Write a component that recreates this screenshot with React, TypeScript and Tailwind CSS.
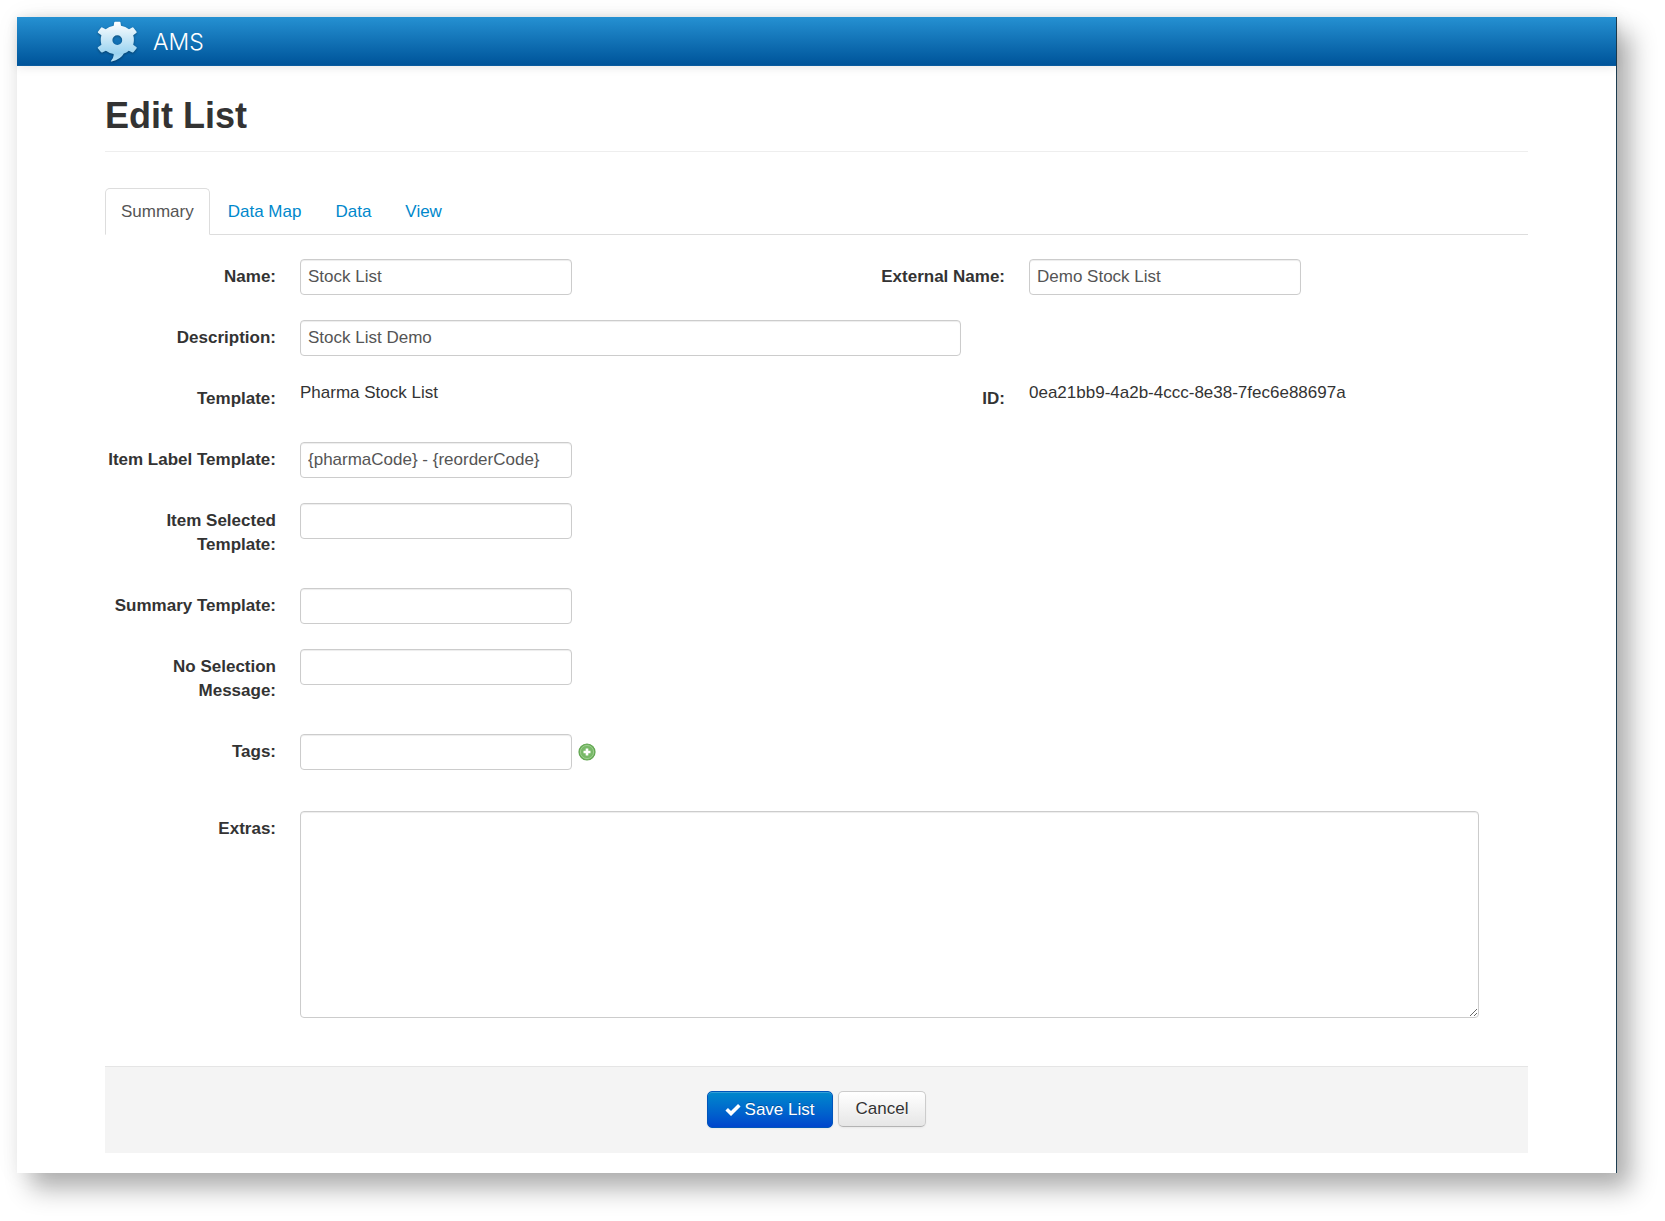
import { useState } from 'react';
import type { ReactNode } from 'react';
import clsx from 'clsx';

const TABS = ['Summary', 'Data Map', 'Data', 'View'];

const inputClass =
  'h-9 rounded border border-[#ccc] bg-white px-[7px] text-[#555] shadow-[inset_0_1px_1px_rgba(0,0,0,0.075)] focus:border-[#52a8ec] focus:outline-none';

interface FieldProps {
  id: string;
  label: string;
  children: ReactNode;
}

function Field({ id, label, children }: FieldProps) {
  return (
    <div className="flex items-start gap-6">
      <label htmlFor={id} className="w-[171px] shrink-0 py-1.5 text-right font-bold">
        {label}
      </label>
      <div className="flex min-w-0 flex-1 items-center gap-1.5">{children}</div>
    </div>
  );
}

interface TextFieldProps {
  id: string;
  label: string;
  initial?: string;
  wide?: boolean;
  children?: ReactNode;
}

function TextField({ id, label, initial = '', wide = false, children }: TextFieldProps) {
  const [value, setValue] = useState(initial);

  return (
    <Field id={id} label={label}>
      <input
        id={id}
        type="text"
        value={value}
        onChange={(e) => setValue(e.target.value)}
        className={clsx(inputClass, 'max-w-full', wide ? 'w-[661px]' : 'w-[272px]')}
      />
      {children}
    </Field>
  );
}

// Gear with a speech-bubble tail
function Logo() {
  return (
    <svg width="42" height="42" viewBox="0 0 42 42" aria-hidden="true" className="drop-shadow-[0_1px_1px_rgba(0,0,0,0.35)]">
      <defs>
        <linearGradient id="logo-fill" x1="0" y1="0" x2="0" y2="1">
          <stop offset="0" stopColor="#ffffff" />
          <stop offset="0.8" stopColor="#9ad3f0" />
          <stop offset="1" stopColor="#b5e0f5" />
        </linearGradient>
      </defs>
      <path
        fill="url(#logo-fill)"
        fillRule="evenodd"
        d="M18.2 1.6Q18.200.7 19.100.7H23.600Q24.500.7 24.500 1.600L25 4.700Q29.600 5.300 33 8.300L36.200 6.400Q37 6 37.500 6.700L40.400 10.600Q41 11.500 40.200 12L37.200 14.200Q38.600 18.800 37.200 23.700L40.300 26Q41.100 26.600 40.500 27.400L37.700 31.100Q37.100 31.900 36.300 31.400L32.800 29.700Q30.500 31.600 27.800 32.600Q24.800 38.600 15.600 40.400Q14.400 40.600 15.100 39.700Q18.200 36 17.600 33Q13.300 32.300 9.900 29.700L6.300 31.400Q5.500 31.900 4.900 31.100L2 27.400Q1.400 26.600 2.200 26L5.400 23.700Q4.100 18.800 5.400 14.200L2.300 12Q1.500 11.500 2.100 10.600L5 6.700Q5.500 6 6.300 6.400L9.700 8.300Q13.100 5.300 17.700 4.700ZM21.300 14.200a4.900 4.900 0 1 0 0 9.800a4.900 4.900 0 1 0 0-9.800z"
      />
    </svg>
  );
}

function AddIcon() {
  return (
    <svg width="18" height="18" viewBox="0 0 18 18" aria-hidden="true">
      <circle cx="9" cy="9" r="8" fill="#78b968" stroke="#61a650" strokeWidth="1.2" />
      <circle cx="9" cy="9" r="6.6" fill="none" stroke="#9ccd8e" strokeWidth="1" />
      <path d="M9 5.500v7M5.500 9h7" stroke="#fff" strokeWidth="2.600" />
    </svg>
  );
}

function CheckIcon() {
  return (
    <svg width="16" height="13" viewBox="0 0 16 13" aria-hidden="true">
      <path d="M1.700 6.200l4.300 4.300L14.300 2.200" fill="none" stroke="#fff" strokeWidth="3.600" />
    </svg>
  );
}

export default function App() {
  const [activeTab, setActiveTab] = useState('Summary');
  const [extras, setExtras] = useState('');

  return (
    <div className="bg-white pt-[17px] pr-12 pb-12 pl-[17px] font-['Liberation_Sans',Arial,sans-serif] text-[17px] leading-6 text-[#333]">
      <div className="border-r border-[#1c3c50] bg-white shadow-[14px_16px_24px_rgba(0,0,0,0.3),0_0_24px_rgba(0,0,0,0.06)]">
        <header className="flex h-[49px] items-center gap-[15px] border-b border-[#0a5c9f] bg-linear-to-b from-[#2591d2] to-[#00549a] pt-0.5 pl-[79px] shadow-[0_1px_10px_rgba(0,0,0,0.1)]">
          <Logo />
          <span className="font-['Inter','Liberation_Sans',sans-serif] text-[23px] font-light text-white">AMS</span>
        </header>

        <main className="pt-7 pr-[88px] pb-5 pl-[88px]">
          <h1 className="border-b border-[#eee] pb-[13px] text-4xl leading-[44px] font-bold">Edit List</h1>

          <nav className="mt-9 flex gap-0.5 border-b border-[#ddd]">
            {TABS.map((tab) => (
              <button
                key={tab}
                type="button"
                onClick={() => setActiveTab(tab)}
                className={clsx(
                  '-mb-px rounded-t-[5px] border px-[15px] pt-[11px] pb-2.5',
                  tab === activeTab
                    ? 'border-[#ddd] border-b-white bg-white text-[#555]'
                    : 'border-transparent text-[#0088cc]',
                )}
              >
                {tab}
              </button>
            ))}
          </nav>

          <form onSubmit={(e) => e.preventDefault()} className="mt-6">
            <div className="flex flex-col gap-[25px]">
              <div className="grid grid-cols-2 gap-x-[35px]">
                <TextField id="name" label="Name:" initial="Stock List" />
                <TextField id="external-name" label="External Name:" initial="Demo Stock List" />
              </div>
              <TextField id="description" label="Description:" initial="Stock List Demo" wide />
              <div className="grid grid-cols-2 gap-x-[35px]">
                <Field id="template" label="Template:">
                  <output id="template">Pharma Stock List</output>
                </Field>
                <Field id="list-id" label="ID:">
                  <output id="list-id">0ea21bb9-4a2b-4ccc-8e38-7fec6e88697a</output>
                </Field>
              </div>
              <TextField id="item-label" label="Item Label Template:" initial="{pharmaCode} - {reorderCode}" />
              <TextField id="item-selected" label="Item Selected Template:" />
              <TextField id="summary-template" label="Summary Template:" />
              <TextField id="no-selection" label="No Selection Message:" />
              <TextField id="tags" label="Tags:">
                <button type="button" aria-label="Add tag">
                  <AddIcon />
                </button>
              </TextField>
            </div>

            <div className="mt-[41px]">
              <Field id="extras" label="Extras:">
                <textarea
                  id="extras"
                  value={extras}
                  onChange={(e) => setExtras(e.target.value)}
                  className={clsx(inputClass, 'h-[207px] w-[96%] py-1.5')}
                />
              </Field>
            </div>

            <div className="mt-12 flex justify-center gap-[5px] border-t border-[#e5e5e5] bg-[#f4f4f4] pt-6 pb-[25px]">
              <button
                type="submit"
                className="flex h-[37px] items-center gap-1 rounded-[5px] border border-[#0055bb] bg-linear-to-b from-[#0088cc] to-[#0044cc] px-[17px] text-white shadow-[inset_0_1px_0_rgba(255,255,255,0.2),0_1px_2px_rgba(0,0,0,0.05)] text-shadow-[0_-1px_0_rgba(0,0,0,0.25)]"
              >
                <CheckIcon />
                Save List
              </button>
              <button
                type="button"
                className="h-9 rounded-[5px] border border-[#ccc] border-b-[#b3b3b3] bg-linear-to-b from-white to-[#e6e6e6] px-[17px] shadow-[inset_0_1px_0_rgba(255,255,255,0.2),0_1px_2px_rgba(0,0,0,0.05)] text-shadow-[0_1px_1px_rgba(255,255,255,0.75)]"
              >
                Cancel
              </button>
            </div>
          </form>
        </main>
      </div>
    </div>
  );
}
